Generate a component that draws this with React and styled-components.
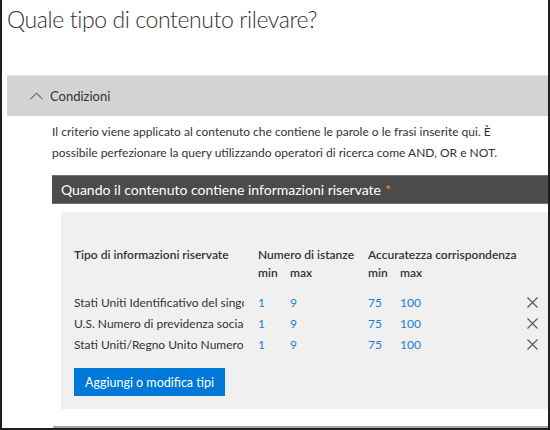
import React from "react";
import styled, { createGlobalStyle } from "styled-components";

const GlobalStyle = createGlobalStyle`
  html, body {
    margin: 0;
    padding: 0;
    background: #ffffff;
  }
  body {
    font-family: Lato, "Open Sans", "Liberation Sans", sans-serif;
    color: #333333;
  }
`;

const Frame = styled.div`
  box-sizing: border-box;
  width: 550px;
  height: 430px;
  overflow: hidden;
  border-left: 2px solid #1f1f1f;
  border-right: 2px solid #1f1f1f;
  border-bottom: 2px solid #1f1f1f;
  background: #ffffff;
`;

const Title = styled.h1`
  margin: 0;
  padding: 2px 0 0 5px;
  height: 75px;
  box-sizing: border-box;
  font-size: 23px;
  font-weight: 300;
  letter-spacing: -0.4px;
  line-height: 34px;
  color: #333333;
`;

const Section = styled.div`
  margin-left: 5px;
`;

const SectionHeader = styled.div`
  box-sizing: border-box;
  height: 41px;
  display: flex;
  align-items: center;
  gap: 7px;
  padding-left: 23px;
  background: #d3d3d3;
  border-top: 1px solid #e2e2e2;
  font-size: 13px;
  color: #333333;
`;

const Description = styled.p`
  margin: 5px 0 0 45px;
  padding-right: 40px;
  font-size: 12px;
  line-height: 21px;
  color: #333333;
`;

const Body = styled.div`
  margin: 12px 0 0 45px;
`;

const DarkHeader = styled.div`
  box-sizing: border-box;
  height: 29px;
  display: flex;
  align-items: center;
  padding-left: 9px;
  background: #4b4b4b;
  border-top: 1px solid #707070;
  border-bottom: 1px solid #707070;
  font-size: 14px;
  color: #ffffff;
`;

const Required = styled.span`
  color: #f08a2c;
  margin-left: 4px;
`;

const Panel = styled.div`
  margin: 8px 0 0 9px;
  padding: 34px 10px 13px 13px;
  background: #f0f0f0;
`;

const Table = styled.div`
  display: grid;
  grid-template-columns: 184px 32px 78px 32px 1fr 12px;
  align-items: center;
  font-size: 12px;
`;

const HeadCell = styled.div`
  font-weight: 600;
  color: #333333;
  line-height: 18px;
  grid-column: ${(p) => p.$span || "auto"};
  white-space: nowrap;
`;

const NameCell = styled.div`
  line-height: 21px;
  white-space: nowrap;
  overflow: hidden;
  margin-right: 14px;
  color: #333333;
`;

const NumCell = styled.div`
  line-height: 21px;
  color: #1b7fd6;
`;

const CloseCell = styled.button`
  border: 0;
  background: none;
  padding: 0;
  height: 21px;
  display: flex;
  align-items: center;
  justify-content: center;
  cursor: pointer;
`;

const Spacer = styled.div`
  grid-column: 1 / -1;
  height: ${(p) => p.$h}px;
`;

const AddButton = styled.button`
  margin-top: 13px;
  height: 28px;
  padding: 0 11px;
  border: 0;
  background: #0078d7;
  color: #ffffff;
  font-family: inherit;
  font-size: 12.5px;
`;

const BottomRule = styled.div`
  margin: 17px 0 0 1px;
  height: 2px;
  background: #a6a6a6;
`;

const Chevron = () => (
  <svg width="13" height="8" viewBox="0 0 13 8">
    <path d="M0.5 7 L6.5 1.2 L12.5 7" fill="none" stroke="#333" strokeWidth="1" />
  </svg>
);

const Cross = () => (
  <svg width="11" height="11" viewBox="0 0 11 11">
    <path d="M0.5 0.5 L10.5 10.5 M10.5 0.5 L0.5 10.5" stroke="#555" strokeWidth="1.1" />
  </svg>
);

const rows = [
  "Stati Uniti Identificativo del singolo contribuente",
  "U.S. Numero di previdenza sociale (SSN)",
  "Stati Uniti/Regno Unito Numero di passaporto",
];

export default function App() {
  return (
    <>
      <GlobalStyle />
      <Frame>
        <Title>Quale tipo di contenuto rilevare?</Title>
        <Section>
          <SectionHeader>
            <Chevron />
            Condizioni
          </SectionHeader>
          <Description>
            Il criterio viene applicato al contenuto che contiene le parole o le frasi inserite qui. È
            possibile perfezionare la query utilizzando operatori di ricerca come AND, OR e NOT.
          </Description>
          <Body>
            <DarkHeader>
              Quando il contenuto contiene informazioni riservate
              <Required>*</Required>
            </DarkHeader>
            <Panel>
              <Table>
                <HeadCell>Tipo di informazioni riservate</HeadCell>
                <HeadCell $span="2 / 4">Numero di istanze</HeadCell>
                <HeadCell $span="4 / 7">Accuratezza corrispondenza</HeadCell>
                <HeadCell $span="2 / 3">min</HeadCell>
                <HeadCell>max</HeadCell>
                <HeadCell>min</HeadCell>
                <HeadCell $span="5 / 7">max</HeadCell>
                <Spacer $h={10} />
                {rows.map((name) => (
                  <React.Fragment key={name}>
                    <NameCell>{name}</NameCell>
                    <NumCell>1</NumCell>
                    <NumCell>9</NumCell>
                    <NumCell>75</NumCell>
                    <NumCell>100</NumCell>
                    <CloseCell aria-label="Rimuovi">
                      <Cross />
                    </CloseCell>
                  </React.Fragment>
                ))}
              </Table>
              <AddButton>Aggiungi o modifica tipi</AddButton>
            </Panel>
            <BottomRule />
          </Body>
        </Section>
      </Frame>
    </>
  );
}
